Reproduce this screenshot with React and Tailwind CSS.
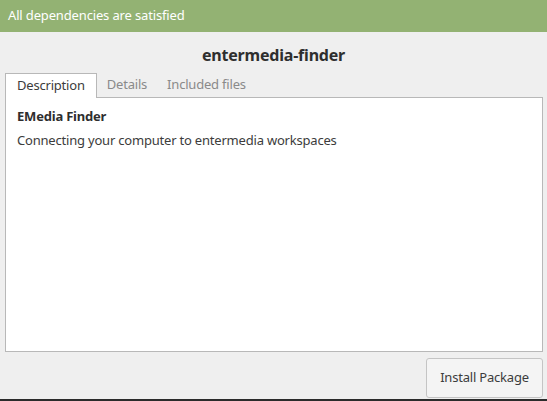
export default function App() {
  return (
    <div
      className="w-[547px] h-[401px] flex flex-col bg-[#efefef] text-[#3c3c3c] overflow-hidden"
      style={{ fontFamily: '"Noto Sans", "Open Sans", sans-serif' }}
    >
      {/* status banner */}
      <div className="h-[32px] shrink-0 bg-[#93b273] text-white text-[13px] tracking-[-0.15px] flex items-center px-[8px]">
        All dependencies are satisfied
      </div>

      {/* package name */}
      <div className="h-[41px] shrink-0 flex items-center justify-center text-[16px] font-bold tracking-[-0.2px] text-[#2e2e2e] pt-[4px]">
        entermedia-finder
      </div>

      {/* tabs */}
      <div className="flex flex-col flex-1 pl-[5px] pr-[4px] text-[13px] tracking-[-0.2px]">
        <div className="flex items-end h-[24px]">
          <div className="h-[25px] -mb-px relative z-10 bg-white border border-b-0 border-[#b8b8b8] px-[11px] flex items-center text-[#3c3c3c]">
            Description
          </div>
          <div className="h-[24px] px-[10px] flex items-center text-[#8a8a8a]">Details</div>
          <div className="h-[24px] px-[10px] flex items-center text-[#8a8a8a]">Included files</div>
        </div>
        <div className="h-[255px] bg-white border border-[#b8b8b8] px-[11px] pt-[9px]">
          <div className="font-bold text-[#2e2e2e]">EMedia Finder</div>
          <div className="mt-[4px]">Connecting your computer to entermedia workspaces</div>
        </div>

        <div className="flex justify-end mt-[6px]">
          <button className="w-[117px] h-[40px] rounded-[3px] border border-[#c4c4c4] bg-[#f4f4f4] text-[#3c3c3c] tracking-[-0.2px]">
            Install Package
          </button>
        </div>
      </div>

      <div className="h-[2px] shrink-0 bg-[#2b2b2b]" />
    </div>
  );
}
